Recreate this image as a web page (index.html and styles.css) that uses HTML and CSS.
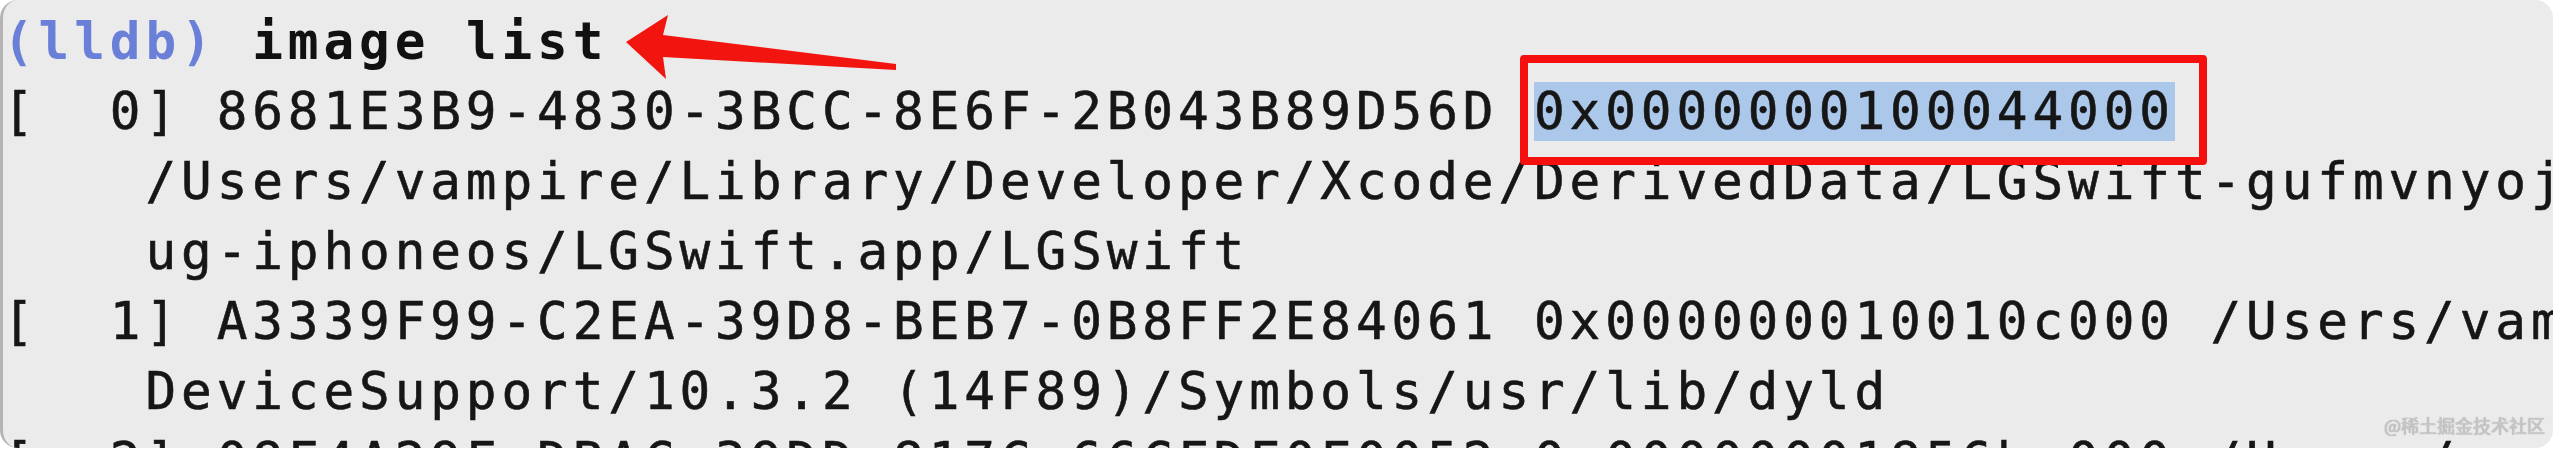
FILE: index.html
```html
<!DOCTYPE html>
<html lang="en">
<head>
  <meta charset="UTF-8">
  <title>lldb – image list</title>
  <link rel="stylesheet" href="styles.css">
</head>
<body>

  <div class="console">
    <div class="line prompt"><span class="lldb">(lldb)</span> <span class="cmd">image list</span></div>
    <div class="line">[  0] 8681E3B9-4830-3BCC-8E6F-2B043B89D56D <span class="selected">0x0000000100044000</span></div>
    <div class="line">    /Users/vampire/Library/Developer/Xcode/DerivedData/LGSwift-gufmvnyojbfq/Build/Products/Deb</div>
    <div class="line">    ug-iphoneos/LGSwift.app/LGSwift</div>
    <div class="line">[  1] A3339F99-C2EA-39D8-BEB7-0B8FF2E84061 0x000000010010c000 /Users/vampire/Library/Developer/Xcode/iOS</div>
    <div class="line">    DeviceSupport/10.3.2 (14F89)/Symbols/usr/lib/dyld</div>
    <div class="line">[  2] 08F4A29F-DBAC-39DD-817C-66CFDF0F0052 0x00000001856bc000 /Users/vampire/Library/Developer/Xcode/iOS</div>

    <!-- annotations drawn over the terminal -->
    <div class="mark-box"></div>
    <svg class="arrow" width="300" height="80" viewBox="0 0 300 80">
      <polygon points="16,32 58,5 53,25 286,54 286,60 53,47 56,69" fill="#f2140f"/>
    </svg>

    <div class="watermark">@稀土掘金技术社区</div>
  </div>

</body>
</html>
```

FILE: styles.css
```css
body {
  margin: 0;
  background: #ffffff;
}

.console {
  position: relative;
  height: 448px;
  margin-right: 7px;
  padding-top: 7px;
  box-sizing: border-box;
  background: #ebebeb;
  border-left: 3px solid #b4b4b4;
  border-radius: 18px;
  overflow: hidden;
  font-family: "DejaVu Sans Mono", monospace;
  font-size: 51px;
  letter-spacing: 4.9px;
  color: #161616;
  -webkit-text-stroke: 0.6px #161616;
}

.line {
  height: 70px;
  line-height: 70px;
  white-space: pre;
}

.prompt {
  font-weight: bold;
  -webkit-text-stroke: 0;
}

.lldb {
  color: #6a7fd8;
}

.cmd {
  color: #111111;
}

.selected {
  background: #abc8ea;
}

.mark-box {
  position: absolute;
  left: 1517px;
  top: 55px;
  width: 687px;
  height: 110px;
  box-sizing: border-box;
  border: 8px solid #f50f0f;
  border-radius: 4px;
}

.arrow {
  position: absolute;
  left: 607px;
  top: 10px;
}

.watermark {
  position: absolute;
  right: 8px;
  bottom: 10px;
  font-family: "Noto Sans CJK SC", sans-serif;
  font-size: 18px;
  letter-spacing: 0;
  color: #c9c9c9;
  -webkit-text-stroke: 0;
  text-shadow: 0 0 1px #8a8a8a;
}
```
